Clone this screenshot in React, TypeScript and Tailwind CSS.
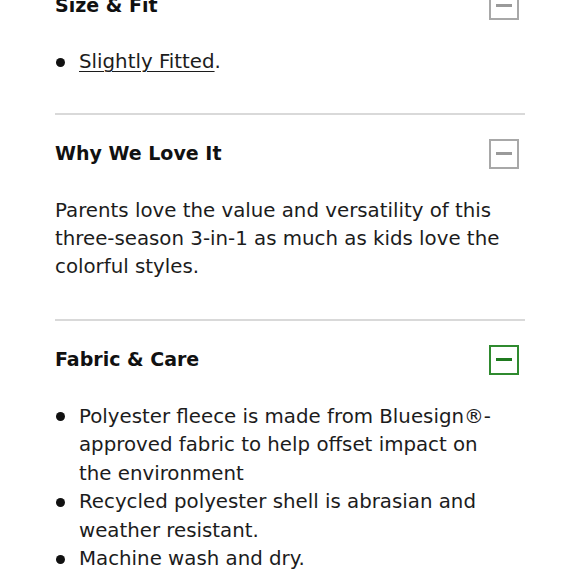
type Section = {
    title: string;
    active?: boolean;
    first?: boolean;
    body: React.ReactNode;
};

function ToggleBox({ active }: { active?: boolean }) {
    return (
        <div
            className={
                active
                    ? 'w-[30px] h-[30px] border-2 border-[#2f8a2f] flex items-center justify-center'
                    : 'w-[30px] h-[30px] border-2 border-[#a8a8a8] flex items-center justify-center'
            }
        >
            <span className={active ? 'block w-[16px] h-[3px] bg-[#1f7a1f]' : 'block w-[16px] h-[3px] bg-[#9a9a9a]'} />
        </div>
    );
}

function Bullet({ children }: { children: React.ReactNode }) {
    return (
        <li className="flex items-start pr-[12px] leading-[28.5px]">
            <span className="w-[24px] shrink-0 flex h-[28.5px] items-center">
                <span className="block w-[9px] h-[9px] rounded-full bg-[#111] ml-[1px]" />
            </span>
            <span>{children}</span>
        </li>
    );
}

const sections: Section[] = [
    {
        title: 'Size & Fit',
        first: true,
        body: (
            <ul>
                <Bullet>
                    <span className="underline underline-offset-[3px] decoration-1">Slightly Fitted</span>.
                </Bullet>
            </ul>
        ),
    },
    {
        title: 'Why We Love It',
        body: (
            <p>
                Parents love the value and versatility of this three-season 3-in-1 as much as kids love the colorful
                styles.
            </p>
        ),
    },
    {
        title: 'Fabric & Care',
        active: true,
        body: (
            <ul>
                <Bullet>Polyester fleece is made from Bluesign®-approved fabric to help offset impact on the environment</Bullet>
                <Bullet>Recycled polyester shell is abrasian and weather resistant.</Bullet>
                <Bullet>Machine wash and dry.</Bullet>
            </ul>
        ),
    },
];

export default function App() {
    return (
        <div className="w-[580px] h-[580px] overflow-hidden bg-white px-[55px] font-['DejaVu_Sans',sans-serif] text-[#1c1c1c]">
            {sections.map((s) => (
                <section
                    key={s.title}
                    className={s.first ? 'pb-[36px] -mt-[10px]' : 'border-t-2 border-[#d9d9d9] pt-[24px] pb-[38px]'}
                >
                    <div className="flex items-center justify-between h-[30px] pr-[6px]">
                        <h3 className="text-[19px] font-bold text-[#111]">{s.title}</h3>
                        <ToggleBox active={s.active} />
                    </div>
                    <div className="mt-[28px] text-[19.8px] leading-[28px]">{s.body}</div>
                </section>
            ))}
        </div>
    );
}
